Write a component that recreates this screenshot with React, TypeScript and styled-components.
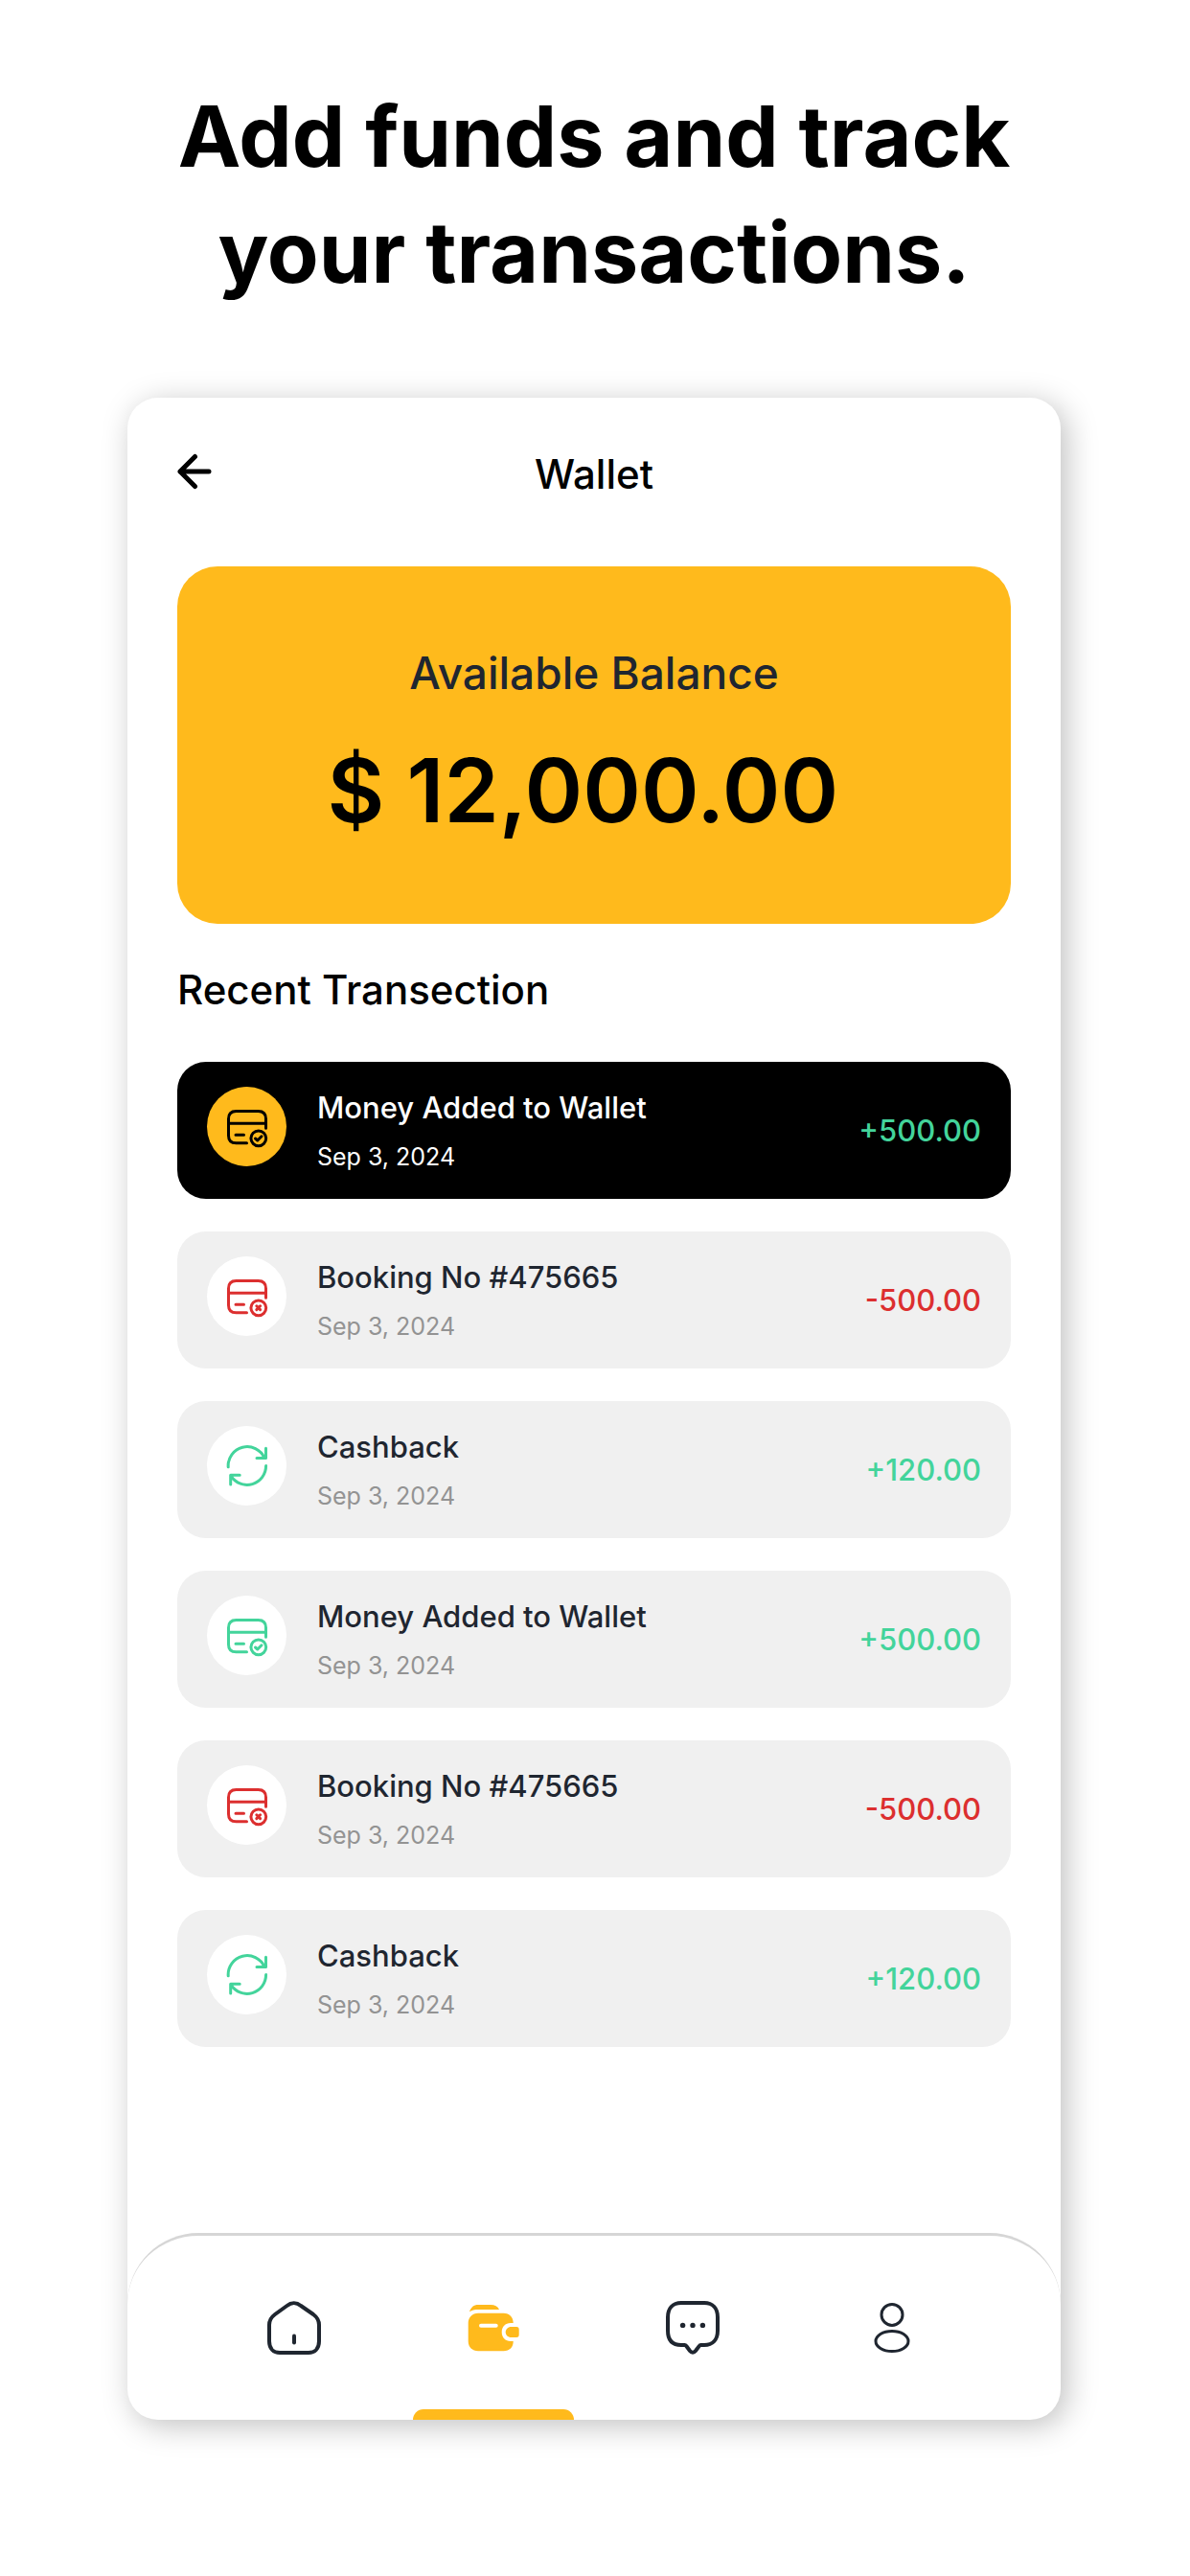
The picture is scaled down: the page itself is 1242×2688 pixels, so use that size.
import React from "react";
import styled, { createGlobalStyle } from "styled-components";

const color = {
  amber: "#ffba1c",
  ink: "#1f2630",
  green: "#43d49b",
  red: "#dc2f2f",
  muted: "#939393",
  tile: "#f0f0f0",
  line: "#d6d6d6",
};

const GlobalStyle = createGlobalStyle`
  *, *::before, *::after { box-sizing: border-box; }
  body {
    margin: 0;
    background: #fff;
    color: #000;
    font-family: Inter, "Liberation Sans", sans-serif;
  }
`;

const Page = styled.main`
  display: flex;
  flex-direction: column;
  gap: 91px;
  padding: 82px 135px 163px 133px;
`;

const Headline = styled.h1`
  margin: 0;
  font-size: 88px;
  line-height: 121px;
  font-weight: 700;
  text-align: center;
`;

const Phone = styled.section`
  display: flex;
  flex-direction: column;
  overflow: hidden;
  border-radius: 32px;
  background: #fff;
  box-shadow: 6px 6px 32px rgba(0, 0, 0, 0.25);
`;

const Screen = styled.div`
  display: flex;
  flex-direction: column;
  padding: 54px 52px 194px;
`;

const TopBar = styled.header`
  display: grid;
  grid-template-columns: 46px 1fr 46px;
  align-items: start;
  margin-bottom: 70px;
`;

const BackButton = styled.button`
  display: flex;
  align-items: center;
  height: 46px;
  padding: 0;
  border: 0;
  background: none;
  color: #000;
  cursor: pointer;
`;

const ScreenTitle = styled.h2`
  margin: 0;
  font-size: 42px;
  line-height: 52px;
  font-weight: 500;
  text-align: center;
`;

const BalanceCard = styled.section`
  display: flex;
  flex-direction: column;
  align-items: center;
  gap: 37px;
  padding: 82px 24px;
  border-radius: 42px;
  background: ${color.amber};
`;

const BalanceLabel = styled.p`
  margin: 0;
  font-size: 46px;
  line-height: 58px;
  font-weight: 500;
  color: ${color.ink};
`;

const BalanceAmount = styled.p`
  margin: 0;
  font-size: 92px;
  line-height: 114px;
  font-weight: 600;
  white-space: pre;
`;

const SectionTitle = styled.h3`
  margin: 43px 0 49px;
  font-size: 42px;
  line-height: 52px;
  font-weight: 500;
`;

const TransactionList = styled.ul`
  display: flex;
  flex-direction: column;
  gap: 34px;
  margin: 0;
  padding: 0;
  list-style: none;
`;

const Transaction = styled.li<{ $featured?: boolean }>`
  display: flex;
  align-items: center;
  gap: 32px;
  height: 143px;
  padding: 0 31px;
  border-radius: 30px;
  background: ${(p) => (p.$featured ? "#000" : color.tile)};
  color: ${(p) => (p.$featured ? "#fff" : color.ink)};
`;

const IconDisc = styled.span<{ $bg: string; $fg: string }>`
  display: flex;
  align-items: center;
  justify-content: center;
  flex: none;
  align-self: flex-start;
  width: 83px;
  height: 83px;
  margin-top: 26px;
  border-radius: 50%;
  background: ${(p) => p.$bg};
  color: ${(p) => p.$fg};
`;

const Details = styled.div`
  display: flex;
  flex: 1;
  flex-direction: column;
  gap: 14px;
`;

const Name = styled.span`
  font-size: 31px;
  line-height: 40px;
  font-weight: 500;
`;

const DateText = styled.time<{ $featured?: boolean }>`
  font-size: 25px;
  line-height: 34px;
  color: ${(p) => (p.$featured ? "#fff" : color.muted)};
`;

const Amount = styled.span<{ $positive: boolean }>`
  font-size: 31px;
  line-height: 40px;
  font-weight: 500;
  color: ${(p) => (p.$positive ? color.green : color.red)};
`;

const TabBar = styled.nav`
  display: flex;
  height: 195px;
  padding: 0 72px 0 70px;
  border-top: 3px solid ${color.line};
  border-radius: 74px 74px 0 0;
`;

const Tab = styled.a<{ $active?: boolean }>`
  position: relative;
  display: flex;
  flex: 1;
  align-items: center;
  justify-content: center;
  color: ${(p) => (p.$active ? color.amber : color.ink)};

  &::after {
    content: "";
    display: ${(p) => (p.$active ? "block" : "none")};
    position: absolute;
    right: 20px;
    bottom: 0;
    left: 20px;
    height: 11px;
    border-radius: 11px 11px 0 0;
    background: ${color.amber};
  }
`;

const Stroke = styled.svg.attrs({ fill: "none", stroke: "currentColor", strokeLinecap: "round", strokeLinejoin: "round", "aria-hidden": true })`
  display: block;
  flex: none;
`;

const BackIcon = () => (
  <Stroke width="36" height="38" viewBox="0 0 36 38" strokeWidth="5">
    <path d="M33 19H3M18.500 3.500L3 19l15.500 15.500" />
  </Stroke>
);

const CardIcon = ({ mark }: { mark: "check" | "cross" }) => (
  <Stroke width="44" height="44" viewBox="0 0 44 44" strokeWidth="3">
    <path d="M41.500 23.200V13.500C41.500 8 39 5.500 33.500 5.500H10.500C5 5.500 2.500 8 2.500 13.500V31C2.500 36.500 5 38.800 10.500 38.800H21.500" />
    <path d="M2.500 18.200H41.500M10 30.200H18.500" />
    <circle cx="33.800" cy="33.800" r="7.900" />
    {mark === "check" ? (
      <path d="M30.500 34L32.800 36L37 31.800" />
    ) : (
      <path d="M31.800 31.800L35.600 35.600M35.600 31.800L31.800 35.600" />
    )}
  </Stroke>
);

const RefreshIcon = () => (
  <Stroke width="44" height="44" viewBox="0 0 44 44" strokeWidth="3">
    <path d="M2.200 22.800A19.800 19.800 0 0 1 40 13.300M41.500 3.200V13.500H32" />
    <path d="M41.600 21.500A19.800 19.800 0 0 1 5.200 32.400M4.700 41V31.200H14.200" />
  </Stroke>
);

const HomeIcon = () => (
  <Stroke width="60" height="60" viewBox="0 0 60 60" strokeWidth="4">
    <path d="M4 27C4 22.500 6 19 10 16L22.500 7C27 3.200 32.500 3.200 37 7L50 16C54 19 56 22.500 56 27V44C56 51.500 51.500 56 45 56H15C8.500 56 4 51.500 4 44Z" />
    <path d="M30 38.500V45.500" />
  </Stroke>
);

const WalletIcon = () => (
  <svg width="60" height="60" viewBox="0 0 60 60" fill="currentColor" aria-hidden="true">
    <path d="M5 13.300C6.500 8.500 9.500 6 14 6H27C31.500 6 34.500 7.500 36 11H14C10.500 11 7.500 11.500 5 13.300Z" />
    <path d="M14 14.700H40.500C47 14.700 50.700 19 50.700 25H48C42.300 25 38.700 29 38.700 34.500S42.300 44 48 44H50.700C50.700 50 47 54.300 40.500 54.300H14C8 54.300 3.700 50 3.700 44V25C3.700 19 8 14.700 14 14.700Z" />
    <path d="M48.500 29H54C56 29 56.700 30 56.700 32V37C56.700 39 56 40 54 40H48.500C45 40 42.700 37.500 42.700 34.500S45 29 48.500 29Z" />
    <path d="M17 27.700H32.700" stroke="#fff" strokeWidth="4" strokeLinecap="round" />
  </svg>
);

const ChatIcon = () => (
  <Stroke width="60" height="60" viewBox="0 0 60 60" strokeWidth="4">
    <path d="M18 4H42C51 4 56 10 56 19V33C56 42 51 48 42 48H38.500C37.500 48 37 48.600 36.500 49.300L33 54C31.200 56.300 28.800 56.300 27 54L23.500 49.300C23 48.600 22.500 48 21.500 48H18C8.500 48 4 43 4 33V19C4 10 9 4 18 4Z" />
    <g fill="currentColor" stroke="none">
      <circle cx="19.600" cy="27.400" r="2.700" />
      <circle cx="30" cy="27.400" r="2.700" />
      <circle cx="40.400" cy="27.400" r="2.700" />
    </g>
  </Stroke>
);

const ProfileIcon = () => (
  <Stroke width="60" height="60" viewBox="0 0 60 60" strokeWidth="3">
    <circle cx="30" cy="16.400" r="11" />
    <ellipse cx="30" cy="44" rx="17" ry="10.600" />
  </Stroke>
);

type Kind = "added" | "booking" | "cashback";

interface Entry {
  kind: Kind;
  name: string;
  amount: string;
  featured?: boolean;
}

const entries: Entry[] = [
  { kind: "added", name: "Money Added to Wallet", amount: "+500.00", featured: true },
  { kind: "booking", name: "Booking No #475665", amount: "-500.00" },
  { kind: "cashback", name: "Cashback", amount: "+120.00" },
  { kind: "added", name: "Money Added to Wallet", amount: "+500.00" },
  { kind: "booking", name: "Booking No #475665", amount: "-500.00" },
  { kind: "cashback", name: "Cashback", amount: "+120.00" },
];

const kindIcon: Record<Kind, React.ReactNode> = {
  added: <CardIcon mark="check" />,
  booking: <CardIcon mark="cross" />,
  cashback: <RefreshIcon />,
};

const tabs = [
  { id: "home", label: "Home", icon: <HomeIcon /> },
  { id: "wallet", label: "Wallet", icon: <WalletIcon /> },
  { id: "messages", label: "Messages", icon: <ChatIcon /> },
  { id: "profile", label: "Profile", icon: <ProfileIcon /> },
];

function TransactionRow({ kind, name, amount, featured }: Entry) {
  const positive = amount.startsWith("+");
  const accent = positive ? color.green : color.red;
  return (
    <Transaction $featured={featured}>
      <IconDisc $bg={featured ? color.amber : "#fff"} $fg={featured ? "#000" : accent}>
        {kindIcon[kind]}
      </IconDisc>
      <Details>
        <Name>{name}</Name>
        <DateText dateTime="2024-09-03" $featured={featured}>Sep 3, 2024</DateText>
      </Details>
      <Amount $positive={positive}>{amount}</Amount>
    </Transaction>
  );
}

export default function App() {
  return (
    <>
      <GlobalStyle />
      <Page>
        <Headline>
          Add funds and track
          <br />
          your transactions.
        </Headline>
        <Phone>
          <Screen>
            <TopBar>
              <BackButton type="button" aria-label="Back">
                <BackIcon />
              </BackButton>
              <ScreenTitle>Wallet</ScreenTitle>
            </TopBar>
            <BalanceCard>
              <BalanceLabel>Available Balance</BalanceLabel>
              <BalanceAmount>{"$ 12,000.00 "}</BalanceAmount>
            </BalanceCard>
            <SectionTitle>Recent Transection</SectionTitle>
            <TransactionList>
              {entries.map((entry, i) => (
                <TransactionRow key={i} {...entry} />
              ))}
            </TransactionList>
          </Screen>
          <TabBar aria-label="Main">
            {tabs.map((tab) => (
              <Tab
                key={tab.id}
                href={`#${tab.id}`}
                aria-label={tab.label}
                aria-current={tab.id === "wallet" ? "page" : undefined}
                $active={tab.id === "wallet"}
              >
                {tab.icon}
              </Tab>
            ))}
          </TabBar>
        </Phone>
      </Page>
    </>
  );
}
